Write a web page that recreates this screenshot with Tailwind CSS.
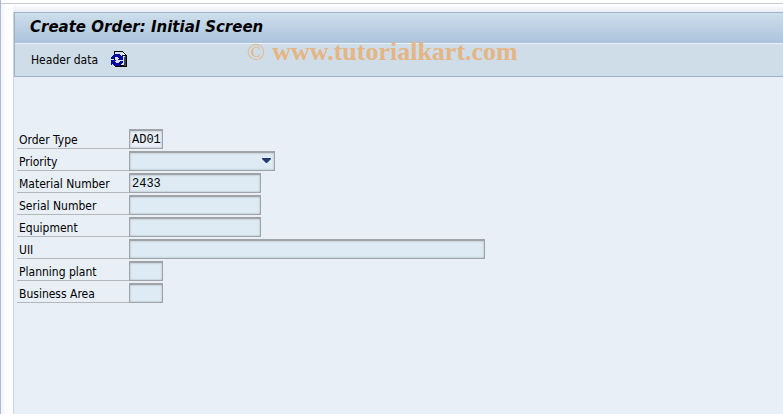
<!DOCTYPE html>
<html lang="en">
<head>
    <meta charset="UTF-8">
    <meta name="viewport" content="width=device-width, initial-scale=1.0">
    <title>Create Order: Initial Screen</title>

    <!-- Tailwind CSS via CDN -->
    <script src="https://cdn.jsdelivr.net/npm/@tailwindcss/browser@4"></script>
</head>
<body class="flex min-h-screen flex-col border-l border-[#b0bccd] bg-white font-['DejaVu_Sans_Condensed','DejaVu_Sans',sans-serif] text-xs text-black">
    <!-- Window edge -->
    <div class="h-1 border-b border-[#c6c9d2]"></div>

    <div class="flex flex-1 flex-col bg-linear-to-r from-[#f1f4fa] to-white to-[6px] pl-3">
        <div class="h-2 bg-linear-to-b from-white to-[#e9eef6]"></div>

        <div class="flex flex-1 flex-col border-l border-[#ccd6e0] bg-[#e8eff7]">
            <!-- Header -->
            <header class="relative border-y border-l border-[#9db2c5]">
                <div class="flex h-[31px] items-center border-b border-[#e8f0f8] bg-linear-to-b from-[#cddfeb] to-[#acc3dc] pb-0.5 pl-[15px]">
                    <h1 class="font-['DejaVu_Sans',sans-serif] text-[15px] font-bold italic leading-5">Create Order: Initial Screen</h1>
                </div>
                <div class="flex h-8 items-center gap-3 bg-[#cfdde8] pl-4">
                    <button type="button" class="leading-4">Header data</button>
                    <button type="button" aria-label="Other order">
                        <svg class="mb-0.5 block h-4 w-[17px]" viewBox="0 0 17 16" shape-rendering="crispEdges">
                            <path d="M4 0h9v1h1v1h1v1h1v1h1v12H5v-2h-1z" fill="#000"/>
                            <path d="M5 1h8v4h2v9H6v-1H5z" fill="#d5e1eb"/>
                            <path d="M13 2h1v1h1v1h-2z" fill="#fff"/>
                            <path d="M15 5h1v10h-2V6h1z" fill="#3c4652"/>
                            <path d="M4 3h6v1h1v1h1V4h1v5H8V8h1V7H8V6H5v1H4v1H1V6h1V5h1V4h1z" fill="#0a0a9c"/>
                            <path d="M1 9h5v1H5v1h1v1h3v-1h1v-1h3v2h-1v1h-1v1h-1v1H4v-1H3v-1H2v1H1z" fill="#0a0a9c"/>
                        </svg>
                    </button>
                </div>
                <p class="pointer-events-none absolute left-[232px] top-[23px] flex items-center gap-[7px] whitespace-nowrap font-['Liberation_Serif',serif] text-[26px] leading-8 text-[#e5b584]">
                    <span class="text-2xl leading-8">©</span>
                    <span class="font-bold">www.tutorialkart.com</span>
                </p>
            </header>

            <!-- Order fields -->
            <form class="flex flex-col gap-0.5 pl-[3px] pt-[52px]">
                <div class="flex h-5">
                    <label for="orderType" class="w-28 border-b border-[#b3b6ba] pl-0.5 leading-[22px]">Order Type</label>
                    <input id="orderType" type="text" value="AD01" class="w-[34px] border border-t-2 border-[#a0a3a8] bg-[#e8eff7] pl-0.5 font-['Liberation_Mono',monospace] inset-shadow-[0_0_2px_#a0a3a8] outline-none">
                </div>
                <div class="flex h-5">
                    <label for="priority" class="w-28 border-b border-[#b3b6ba] pl-0.5 leading-[22px]">Priority</label>
                    <div class="relative flex w-[146px]">
                        <select id="priority" class="w-full appearance-none border border-t-2 border-[#a0a3a8] bg-[#deebf5] pl-0.5 inset-shadow-[0_0_2px_#a0a3a8] outline-none">
                            <option></option>
                        </select>
                        <svg class="pointer-events-none absolute right-1 top-[7px] h-[5px] w-[9px]" viewBox="0 0 9 5">
                            <path d="M0 0h9v1L5 5H4L0 1z" fill="#253a70"/>
                        </svg>
                    </div>
                </div>
                <div class="flex h-5">
                    <label for="material" class="w-28 border-b border-[#b3b6ba] pl-0.5 leading-[22px]">Material Number</label>
                    <input id="material" type="text" value="2433" class="w-[132px] border border-t-2 border-[#a0a3a8] bg-[#deebf5] pl-0.5 font-['Liberation_Mono',monospace] inset-shadow-[0_0_2px_#a0a3a8] outline-none">
                </div>
                <div class="flex h-5">
                    <label for="serial" class="w-28 border-b border-[#b3b6ba] pl-0.5 leading-[22px]">Serial Number</label>
                    <input id="serial" type="text" class="w-[132px] border border-t-2 border-[#a0a3a8] bg-[#deebf5] pl-0.5 font-['Liberation_Mono',monospace] inset-shadow-[0_0_2px_#a0a3a8] outline-none">
                </div>
                <div class="flex h-5">
                    <label for="equipment" class="w-28 border-b border-[#b3b6ba] pl-0.5 leading-[22px]">Equipment</label>
                    <input id="equipment" type="text" class="w-[132px] border border-t-2 border-[#a0a3a8] bg-[#deebf5] pl-0.5 font-['Liberation_Mono',monospace] inset-shadow-[0_0_2px_#a0a3a8] outline-none">
                </div>
                <div class="flex h-5">
                    <label for="uii" class="w-28 border-b border-[#b3b6ba] pl-0.5 leading-[22px]">UII</label>
                    <input id="uii" type="text" class="w-[356px] border border-t-2 border-[#a0a3a8] bg-[#deebf5] pl-0.5 font-['Liberation_Mono',monospace] inset-shadow-[0_0_2px_#a0a3a8] outline-none">
                </div>
                <div class="flex h-5">
                    <label for="plant" class="w-28 border-b border-[#b3b6ba] pl-0.5 leading-[22px]">Planning plant</label>
                    <input id="plant" type="text" class="w-[34px] border border-t-2 border-[#a0a3a8] bg-[#deebf5] pl-0.5 font-['Liberation_Mono',monospace] inset-shadow-[0_0_2px_#a0a3a8] outline-none">
                </div>
                <div class="flex h-5">
                    <label for="area" class="w-28 border-b border-[#b3b6ba] pl-0.5 leading-[22px]">Business Area</label>
                    <input id="area" type="text" class="w-[34px] border border-t-2 border-[#a0a3a8] bg-[#deebf5] pl-0.5 font-['Liberation_Mono',monospace] inset-shadow-[0_0_2px_#a0a3a8] outline-none">
                </div>
            </form>
        </div>
    </div>
</body>
</html>
